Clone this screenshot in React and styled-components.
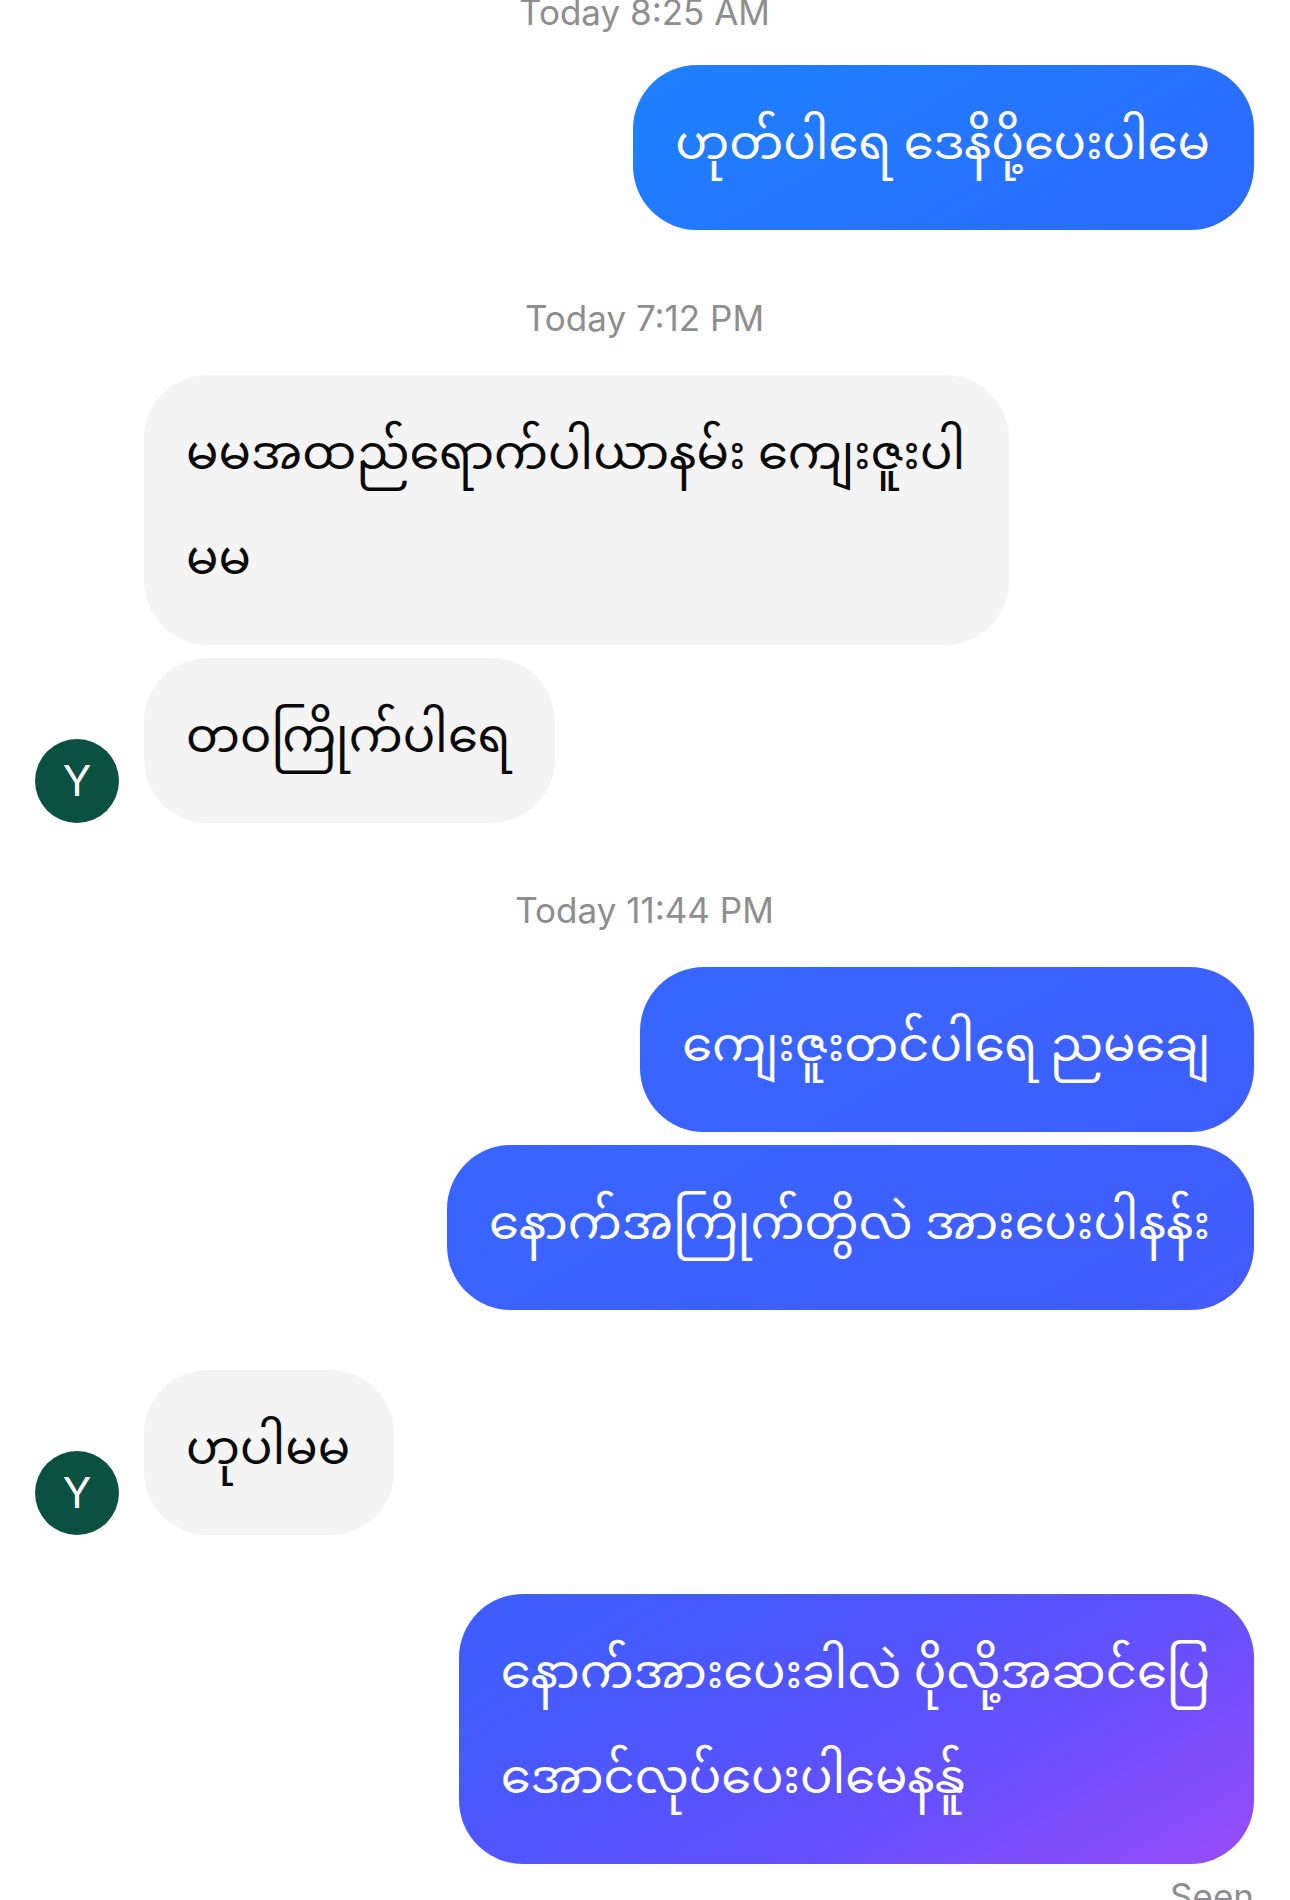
import React from "react";
import styled, { createGlobalStyle } from "styled-components";

const Page = createGlobalStyle`
  html, body { margin: 0; background: #fefefe; }
`;

const Thread = styled.main`
  width: 1290px;
  height: 1900px;
  overflow: hidden;
  box-sizing: border-box;
  padding: 0 36px 0 35px;
  display: flex;
  flex-direction: column;
  font-family: "Noto Sans Myanmar", Roboto, "Noto Sans", sans-serif;
`;

const Stamp = styled.div`
  height: 40px;
  line-height: 40px;
  margin-top: ${(p) => p.$top}px;
  text-align: center;
  font-family: Inter, "Liberation Sans", sans-serif;
  font-size: 35px;
  color: #8e8e8e;
  flex: none;
`;

const Row = styled.div`
  display: flex;
  align-items: flex-end;
  justify-content: ${(p) => (p.$mine ? "flex-end" : "flex-start")};
  margin-top: ${(p) => p.$top}px;
  flex: none;
`;

const Avatar = styled.div`
  width: 84px;
  height: 84px;
  border-radius: 50%;
  background: #0b5141;
  color: #fff;
  font-family: Inter, "Liberation Sans", sans-serif;
  font-size: 42px;
  line-height: 84px;
  text-align: center;
  flex: none;
`;

const AvatarSlot = styled.div`
  width: 84px;
  margin-right: 25px;
  flex: none;
`;

const Bubble = styled.div`
  box-sizing: border-box;
  padding: 30px 44px 30px 42px;
  border-radius: 64px;
  font-size: 48px;
  line-height: 105px;
  white-space: nowrap;
  color: ${(p) => (p.$mine ? "#fff" : "#0a0a0a")};
  background: ${(p) =>
    p.$mine
      ? "linear-gradient(150deg, #1a86ff 0%, #1f7eff 19.5%, #2a6cff 33%, #3a63ff 59%, #3f5cff 74%, #5055ff 81%, #6250fd 87%, #7f4dfb 93%, #9a4cf8 98%, #a04cf6 100%) fixed"
      : "#f4f4f4"};
`;

const Seen = styled.div`
  height: 40px;
  line-height: 40px;
  margin-top: 12px;
  text-align: right;
  font-family: Inter, "Liberation Sans", sans-serif;
  font-size: 35px;
  color: #8e8e8e;
  flex: none;
`;

const Message = ({ mine, top, avatar, children }) => (
  <Row $mine={mine} $top={top}>
    {!mine && <AvatarSlot>{avatar && <Avatar>Y</Avatar>}</AvatarSlot>}
    <Bubble $mine={mine}>{children}</Bubble>
  </Row>
);

export default function App() {
  return (
    <>
      <Page />
      <Thread>
        <Stamp $top={-8}>Today 8:25 AM</Stamp>
        <Message mine top={33}>ဟုတ်ပါရေ ဒေနိပို့ပေးပါမေ</Message>
        <Stamp $top={68}>Today 7:12 PM</Stamp>
        <Message top={37}>
          မမအထည်ရောက်ပါယာနမ်း ကျေးဇူးပါ
          <br />
          မမ
        </Message>
        <Message top={13} avatar>တ၀ကြိုက်ပါရေ</Message>
        <Stamp $top={67}>Today 11:44 PM</Stamp>
        <Message mine top={37}>ကျေးဇူးတင်ပါရေ ညမချေ</Message>
        <Message mine top={13}>နောက်အကြိုက်တွိလဲ အားပေးပါနန်း</Message>
        <Message top={60} avatar>ဟုပါမမ</Message>
        <Message mine top={59}>
          နောက်အားပေးခါလဲ ပိုလို့အဆင်ပြေ
          <br />
          အောင်လုပ်ပေးပါမေနန်ူ
        </Message>
        <Seen>Seen</Seen>
      </Thread>
    </>
  );
}
